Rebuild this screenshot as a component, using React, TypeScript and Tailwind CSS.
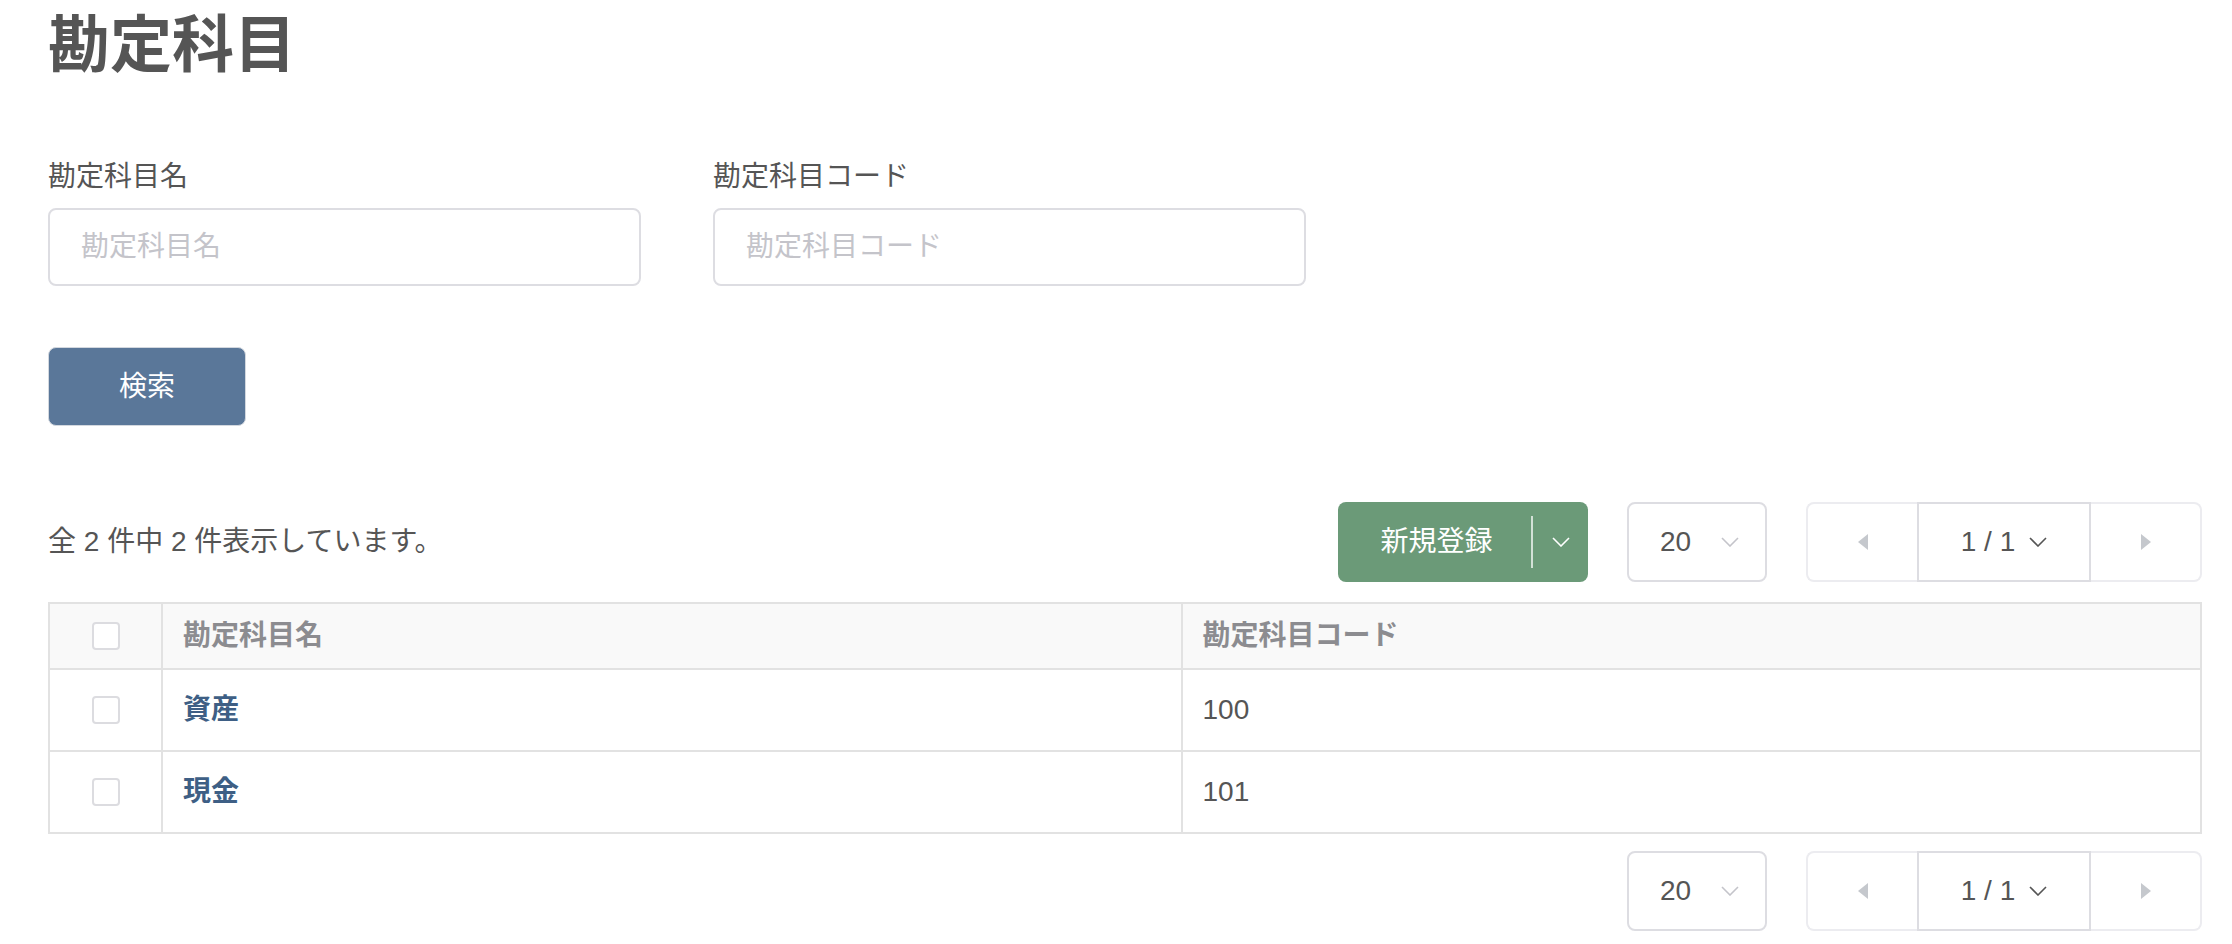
import React from "react";

type Account = { name: string; code: string };

const accounts: Account[] = [
  { name: "資産", code: "100" },
  { name: "現金", code: "101" },
];

function Chevron({ className }: { className?: string }) {
  return (
    <svg viewBox="0 0 18 10" className={className} fill="none" stroke="currentColor" strokeWidth="1.6">
      <polyline points="1,1 9,9 17,1" />
    </svg>
  );
}

function Triangle({ dir }: { dir: "left" | "right" }) {
  return (
    <svg viewBox="0 0 10 16" className="h-[16px] w-[10px] text-[#c5c8cd]" fill="currentColor">
      {dir === "left" ? <polygon points="10,0 10,16 0,8" /> : <polygon points="0,0 0,16 10,8" />}
    </svg>
  );
}

function PerPage() {
  return (
    <div className="flex h-[80px] w-[140px] items-center justify-between rounded-[8px] border-2 border-[#dddde2] pl-[31px] pr-[26px]">
      <span className="text-[28px]">20</span>
      <Chevron className="h-[10px] w-[18px] text-[#c4c4ca]" />
    </div>
  );
}

function Pager() {
  return (
    <div className="flex h-[80px]">
      <button className="flex w-[111px] items-center justify-center rounded-l-[8px] border-2 border-r-0 border-[#ececf0]">
        <Triangle dir="left" />
      </button>
      <button className="flex w-[174px] items-center justify-center gap-[14px] border-2 border-[#dddde2]">
        <span className="text-[28px]">1 / 1</span>
        <Chevron className="h-[10px] w-[18px] text-[#555]" />
      </button>
      <button className="flex w-[111px] items-center justify-center rounded-r-[8px] border-2 border-l-0 border-[#ececf0]">
        <Triangle dir="right" />
      </button>
    </div>
  );
}

function Field({ label }: { label: string }) {
  return (
    <div className="w-[593px]">
      <label className="block text-[28px] leading-[36px]">{label}</label>
      <input
        placeholder={label}
        className="mt-[13px] h-[78px] w-full rounded-[8px] border-2 border-[#dddde2] pl-[31px] text-[28px] outline-none placeholder:text-[#c4c4ca]"
      />
    </div>
  );
}

export default function App() {
  return (
    <div className="min-h-[944px] bg-white pl-[48px] pr-[30px] font-['Liberation_Sans','Noto_Sans_CJK_JP',sans-serif] text-[#555]">
      <h1 className="pt-[14px] text-[62px] font-bold leading-[64px]">勘定科目</h1>

      <div className="mt-[81px] flex gap-[72px]">
        <Field label="勘定科目名" />
        <Field label="勘定科目コード" />
      </div>

      <button className="mt-[61px] h-[79px] w-[198px] rounded-[8px] border border-[#d3d8df] bg-[#5a7799] text-[28px] text-white">
        検索
      </button>

      <div className="mt-[76px] flex h-[80px] items-center justify-between">
        <p className="text-[28px]">全 2 件中 2 件表示しています。</p>
        <div className="flex items-center gap-[39px]">
          <div className="flex h-[80px] w-[250px] items-center rounded-[8px] bg-[#6b9a78] text-white">
            <span className="flex-1 pl-[4px] text-center text-[28px]">新規登録</span>
            <span className="h-[52px] w-[2px] bg-white/70" />
            <span className="flex w-[55px] items-center justify-center">
              <Chevron className="h-[10px] w-[18px]" />
            </span>
          </div>
          <PerPage />
          <Pager />
        </div>
      </div>

      <table className="mt-[20px] w-full table-fixed border-collapse border-2 border-[#e2e2e2] text-[28px]">
        <colgroup>
          <col className="w-[113px]" />
          <col />
          <col />
        </colgroup>
        <thead>
          <tr className="h-[66px] bg-[#f9f9f9]">
            <th className="border-2 border-[#e2e2e2]">
              <span className="mx-auto block h-[28px] w-[28px] rounded-[4px] border-2 border-[#dcdce0] bg-white" />
            </th>
            <th className="border-2 border-[#e2e2e2] pl-[20px] text-left font-bold text-[#8c8c90]">勘定科目名</th>
            <th className="border-2 border-[#e2e2e2] pl-[20px] text-left font-bold text-[#8c8c90]">勘定科目コード</th>
          </tr>
        </thead>
        <tbody>
          {accounts.map((a) => (
            <tr key={a.code} className="h-[82px]">
              <td className="border-2 border-[#e2e2e2]">
                <span className="mx-auto block h-[28px] w-[28px] rounded-[4px] border-2 border-[#dcdce0] bg-white" />
              </td>
              <td className="border-2 border-[#e2e2e2] pl-[20px]">
                <a className="font-semibold text-[#3e5f85]">{a.name}</a>
              </td>
              <td className="border-2 border-[#e2e2e2] pl-[20px]">{a.code}</td>
            </tr>
          ))}
        </tbody>
      </table>

      <div className="mt-[17px] flex justify-end gap-[39px]">
        <PerPage />
        <Pager />
      </div>
    </div>
  );
}
